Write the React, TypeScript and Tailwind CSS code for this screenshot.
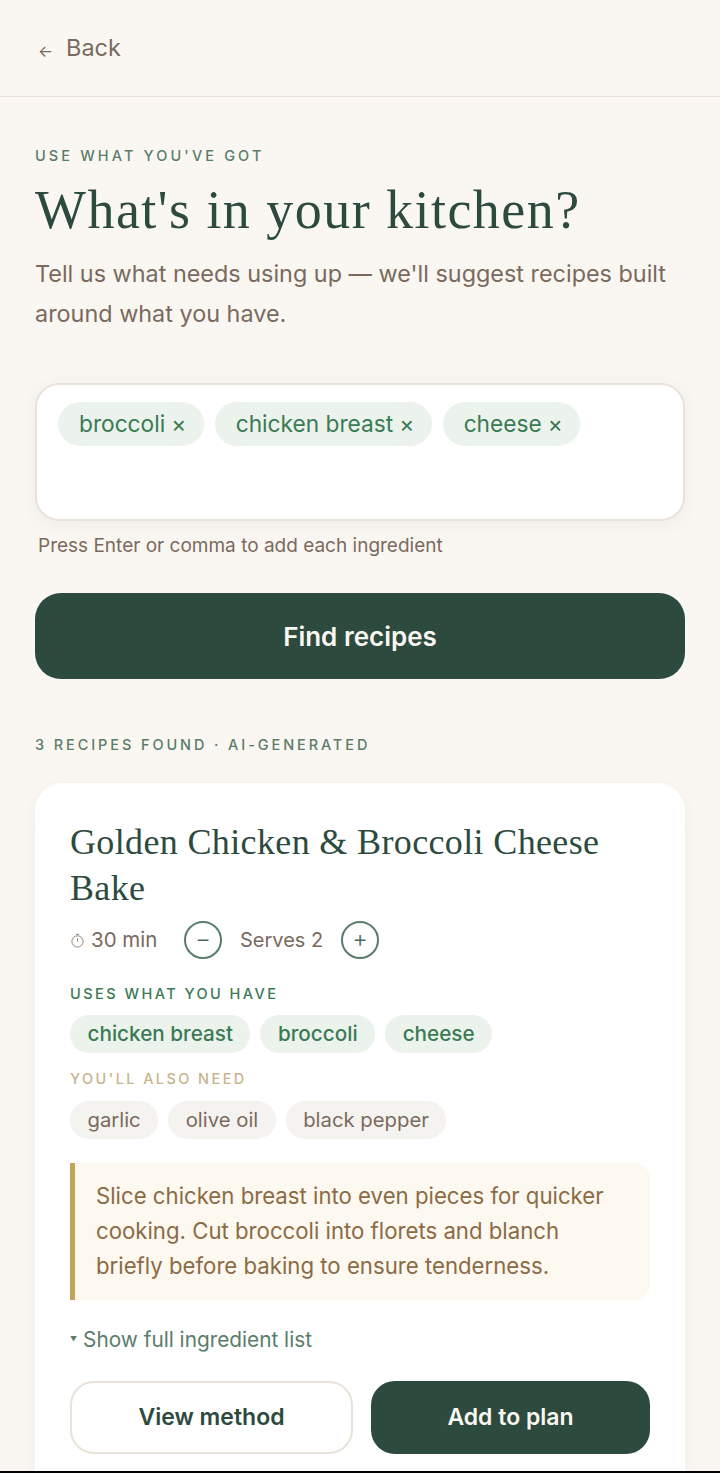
const sans = "font-['Inter','Noto_Sans',sans-serif]"

function Tag({ label }: { label: string }) {
  return (
    <span className="flex h-[44px] items-center rounded-[22px] bg-[#ebf3ec] pl-[21px] pr-[17.5px] pt-[1px] text-[22.7px] text-[#3a7a55]">
      {label}
      <span className="ml-[6px]">×</span>
    </span>
  )
}

function Pill({ label, have }: { label: string; have?: boolean }) {
  return (
    <span
      className={
        have
          ? 'flex h-[38px] items-center rounded-[19px] bg-[#ebf3ec] px-[17.5px] text-[20.7px] font-medium text-[#3a7a55]'
          : 'flex h-[38px] items-center rounded-[19px] bg-[#f5f3ef] px-[17.5px] text-[20.3px] text-[#7a6a5e]'
      }
    >
      {label}
    </span>
  )
}

function RoundButton({ label }: { label: string }) {
  return (
    <span className="flex h-[38px] w-[38px] items-center justify-center rounded-full border-2 border-[#5a7d6a] pb-[2px] text-[24px] font-light leading-none text-[#4a6b5a]">
      {label}
    </span>
  )
}

export default function App() {
  return (
    <div className="h-[1473px] overflow-hidden bg-black">
      <div className={`${sans} h-[1471px] overflow-hidden bg-[#faf7f2]`}>
        <header className="flex h-[97px] items-center border-b border-[#e8e2d9] px-[38px]">
          <span className="mt-[6px] w-[28px] text-[16px] text-[#7a6a5e]">←</span>
          <span className="text-[23.5px] text-[#7a6a5e]">Back</span>
        </header>

        <main className="px-[35px] pt-[49px]">
          <p className="text-[14.5px] font-medium leading-[20px] tracking-[0.215em] text-[#5a7d6a]">USE WHAT YOU'VE GOT</p>
          <h1 className="mt-[12px] font-['Liberation_Serif',serif] text-[54px] font-normal leading-[64px] tracking-[0.027em] text-[#2d4a3e]">
            What's in your kitchen?
          </h1>
          <p className="mt-[12px] text-[23.4px] leading-[39.5px] text-[#7a6a5e]">
            Tell us what needs using up — we'll suggest recipes built around what you have.
          </p>

          <div className="mt-[50px] h-[138px] rounded-[24px] border-2 border-[#e8e2d9] bg-white px-[21px] pt-[17px] shadow-[0_4px_20px_rgba(45,74,62,0.06)]">
            <div className="flex gap-[11px]">
              <Tag label="broccoli" />
              <Tag label="chicken breast" />
              <Tag label="cheese" />
            </div>
          </div>
          <p className="ml-[3px] mt-[13px] text-[19px] leading-[24px] text-[#7a6a5e]">Press Enter or comma to add each ingredient</p>

          <button className="mt-[35px] flex h-[86px] w-full items-center justify-center rounded-[26px] bg-[#2d4a3e] text-[26px] font-semibold text-[#faf7f2]">
            Find recipes
          </button>

          <p className="mt-[56px] text-[14.5px] font-medium leading-[20px] tracking-[0.2em] text-[#5a7d6a]">3 RECIPES FOUND · AI-GENERATED</p>

          <section className="mt-[28px] h-[720px] rounded-[28px] bg-white px-[35px] pt-[36px] shadow-[0_4px_20px_rgba(45,74,62,0.04)]">
            <h2 className="font-['Liberation_Serif',serif] text-[36px] font-normal leading-[46px] tracking-[0.01em] text-[#2d4a3e]">
              Golden Chicken &amp; Broccoli Cheese Bake
            </h2>
            <div className="mt-[10px] flex h-[38px] items-center text-[20.5px] text-[#7a6a5e]">
              <svg viewBox="0 0 16 16" className="mr-[6px] h-[15px] w-[15px]" fill="none" stroke="#8a7a6e" strokeWidth="1">
                <circle cx="8" cy="9" r="6" />
                <path d="M8 9V5.5M6.5 1.5h3" />
              </svg>
              <span className="w-[93px]">30 min</span>
              <RoundButton label="−" />
              <span className="w-[119px] pl-[18px] text-[20px]">Serves 2</span>
              <RoundButton label="+" />
            </div>

            <p className="mt-[25px] text-[14.5px] font-medium leading-[20px] tracking-[0.17em] text-[#3a7a55]">USES WHAT YOU HAVE</p>
            <div className="mt-[11px] flex gap-[10px]">
              <Pill have label="chicken breast" />
              <Pill have label="broccoli" />
              <Pill have label="cheese" />
            </div>
            <p className="mt-[16px] text-[14.5px] font-medium leading-[20px] tracking-[0.167em] text-[#c8b48e]">YOU'LL ALSO NEED</p>
            <div className="mt-[12px] flex gap-[10px]">
              <Pill label="garlic" />
              <Pill label="olive oil" />
              <Pill label="black pepper" />
            </div>

            <div className="mt-[24px] rounded-r-[16px] border-l-[5px] border-[#c4a35a] bg-[#fdf8f0] pb-[17px] pl-[21px] pr-[20px] pt-[15px] text-[22.2px] leading-[35px] text-[#8b6b45]">
              Slice chicken breast into even pieces for quicker cooking. Cut broccoli into florets and blanch briefly before baking to ensure tenderness.
            </div>

            <p className="mt-[26px] flex items-center text-[20.8px] leading-[28px] text-[#5a7d6a]">
              <span className="mr-[6px] text-[7px]">▼</span>Show full ingredient list
            </p>

            <div className="mt-[27px] flex gap-[18px]">
              <button className="flex h-[73px] flex-1 items-center justify-center rounded-[24px] border-2 border-[#e8e2d9] bg-white text-[23px] font-semibold text-[#2d4a3e]">
                View method
              </button>
              <button className="flex h-[73px] flex-1 items-center justify-center rounded-[24px] bg-[#2d4a3e] text-[23px] font-semibold text-[#faf7f2]">
                Add to plan
              </button>
            </div>
          </section>
        </main>
      </div>
    </div>
  )
}
